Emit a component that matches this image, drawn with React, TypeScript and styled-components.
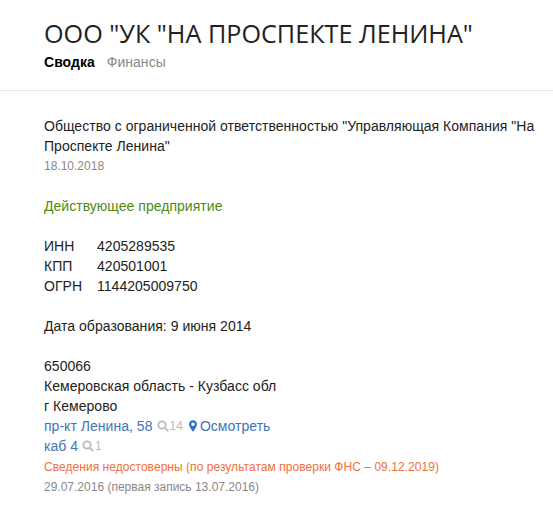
import styled, { createGlobalStyle } from "styled-components";

const Global = createGlobalStyle`
    html, body {
        margin: 0;
        padding: 0;
        background: #fff;
    }
    body {
        font-family: "Liberation Sans", Arial, sans-serif;
        font-size: 14px;
        line-height: 20px;
        letter-spacing: 0.03px;
        color: #222;
    }
`;

const Page = styled.div`
    width: 553px;
    height: 515px;
    overflow: hidden;
`;

const Header = styled.header`
    padding: 17px 44px 0;
    height: 73px;
    border-bottom: 1px solid #e8e8e8;
`;

const Title = styled.h1`
    margin: 0;
    font-family: "Open Sans", sans-serif;
    font-size: 25.2px;
    font-weight: 400;
    line-height: 32px;
    letter-spacing: 0;
    color: #222;
    white-space: nowrap;
`;

const Tabs = styled.nav`
    display: flex;
    gap: 12px;
    margin-top: 3px;
`;

const Tab = styled.span<{ $active?: boolean }>`
    font-weight: ${(p) => (p.$active ? 700 : 400)};
    color: ${(p) => (p.$active ? "#000" : "#888")};
`;

const Content = styled.main`
    padding: 25px 0 0 44px;
    width: 500px;
`;

const Block = styled.section`
    margin-bottom: 20px;
`;

const Small = styled.div`
    font-size: 12px;
    letter-spacing: 0;
    color: #888;
`;

const Warning = styled(Small)`
    margin-top: 1px;
    letter-spacing: 0.045px;
    color: #f0703a;
`;

const Status = styled.div`
    color: #4d8a12;
`;

const Codes = styled.div`
    display: grid;
    grid-template-columns: 53px auto;
    justify-content: start;
`;

const Line = styled.div`
    display: flex;
    align-items: center;
    white-space: nowrap;
`;

const Link = styled.a`
    color: #3f74b5;
`;

const Count = styled.span`
    display: inline-flex;
    align-items: center;
    gap: 1px;
    margin-left: 4px;
    font-size: 12px;
    color: #bbb;
`;

const PinLink = styled(Link)`
    display: inline-flex;
    align-items: center;
    gap: 3px;
    margin-left: 6px;
`;

function Lens() {
    return (
        <svg width="12" height="12" viewBox="0 0 12 12" fill="none" stroke="#bbb" strokeWidth="1.8">
            <circle cx="5" cy="5" r="3.7" />
            <path d="M7.8 7.8l3.4 3.4" />
        </svg>
    );
}

function Pin() {
    return (
        <svg width="8" height="12" viewBox="0 0 9 13">
            <path
                fill="#2f6fc4"
                fillRule="evenodd"
                d="M4.5 0C2 0 0 2 0 4.6 0 7.6 4.5 13 4.5 13S9 7.6 9 4.6C9 2 7 0 4.5 0zm0 2.6a2 2 0 1 1 0 4 2 2 0 0 1 0-4z"
            />
        </svg>
    );
}

function App() {
    return (
        <Page>
            <Global />
            <Header>
                <Title>ООО "УК "НА ПРОСПЕКТЕ ЛЕНИНА"</Title>
                <Tabs>
                    <Tab $active>Сводка</Tab>
                    <Tab>Финансы</Tab>
                </Tabs>
            </Header>
            <Content>
                <Block>
                    Общество с ограниченной ответственностью "Управляющая Компания "На Проспекте Ленина"
                    <Small>18.10.2018</Small>
                </Block>
                <Block>
                    <Status>Действующее предприятие</Status>
                </Block>
                <Block>
                    <Codes>
                        <span>ИНН</span>
                        <span>4205289535</span>
                        <span>КПП</span>
                        <span>420501001</span>
                        <span>ОГРН</span>
                        <span>1144205009750</span>
                    </Codes>
                </Block>
                <Block>Дата образования: 9 июня 2014</Block>
                <div>650066</div>
                <div>Кемеровская область - Кузбасс обл</div>
                <div>г Кемерово</div>
                <Line>
                    <Link>пр-кт Ленина, 58</Link>
                    <Count>
                        <Lens />
                        14
                    </Count>
                    <PinLink>
                        <Pin />
                        Осмотреть
                    </PinLink>
                </Line>
                <Line>
                    <Link>каб 4</Link>
                    <Count>
                        <Lens />
                        1
                    </Count>
                </Line>
                <Warning>Сведения недостоверны (по результатам проверки ФНС – 09.12.2019)</Warning>
                <Small>29.07.2016 (первая запись 13.07.2016)</Small>
            </Content>
        </Page>
    );
}

export default App;
